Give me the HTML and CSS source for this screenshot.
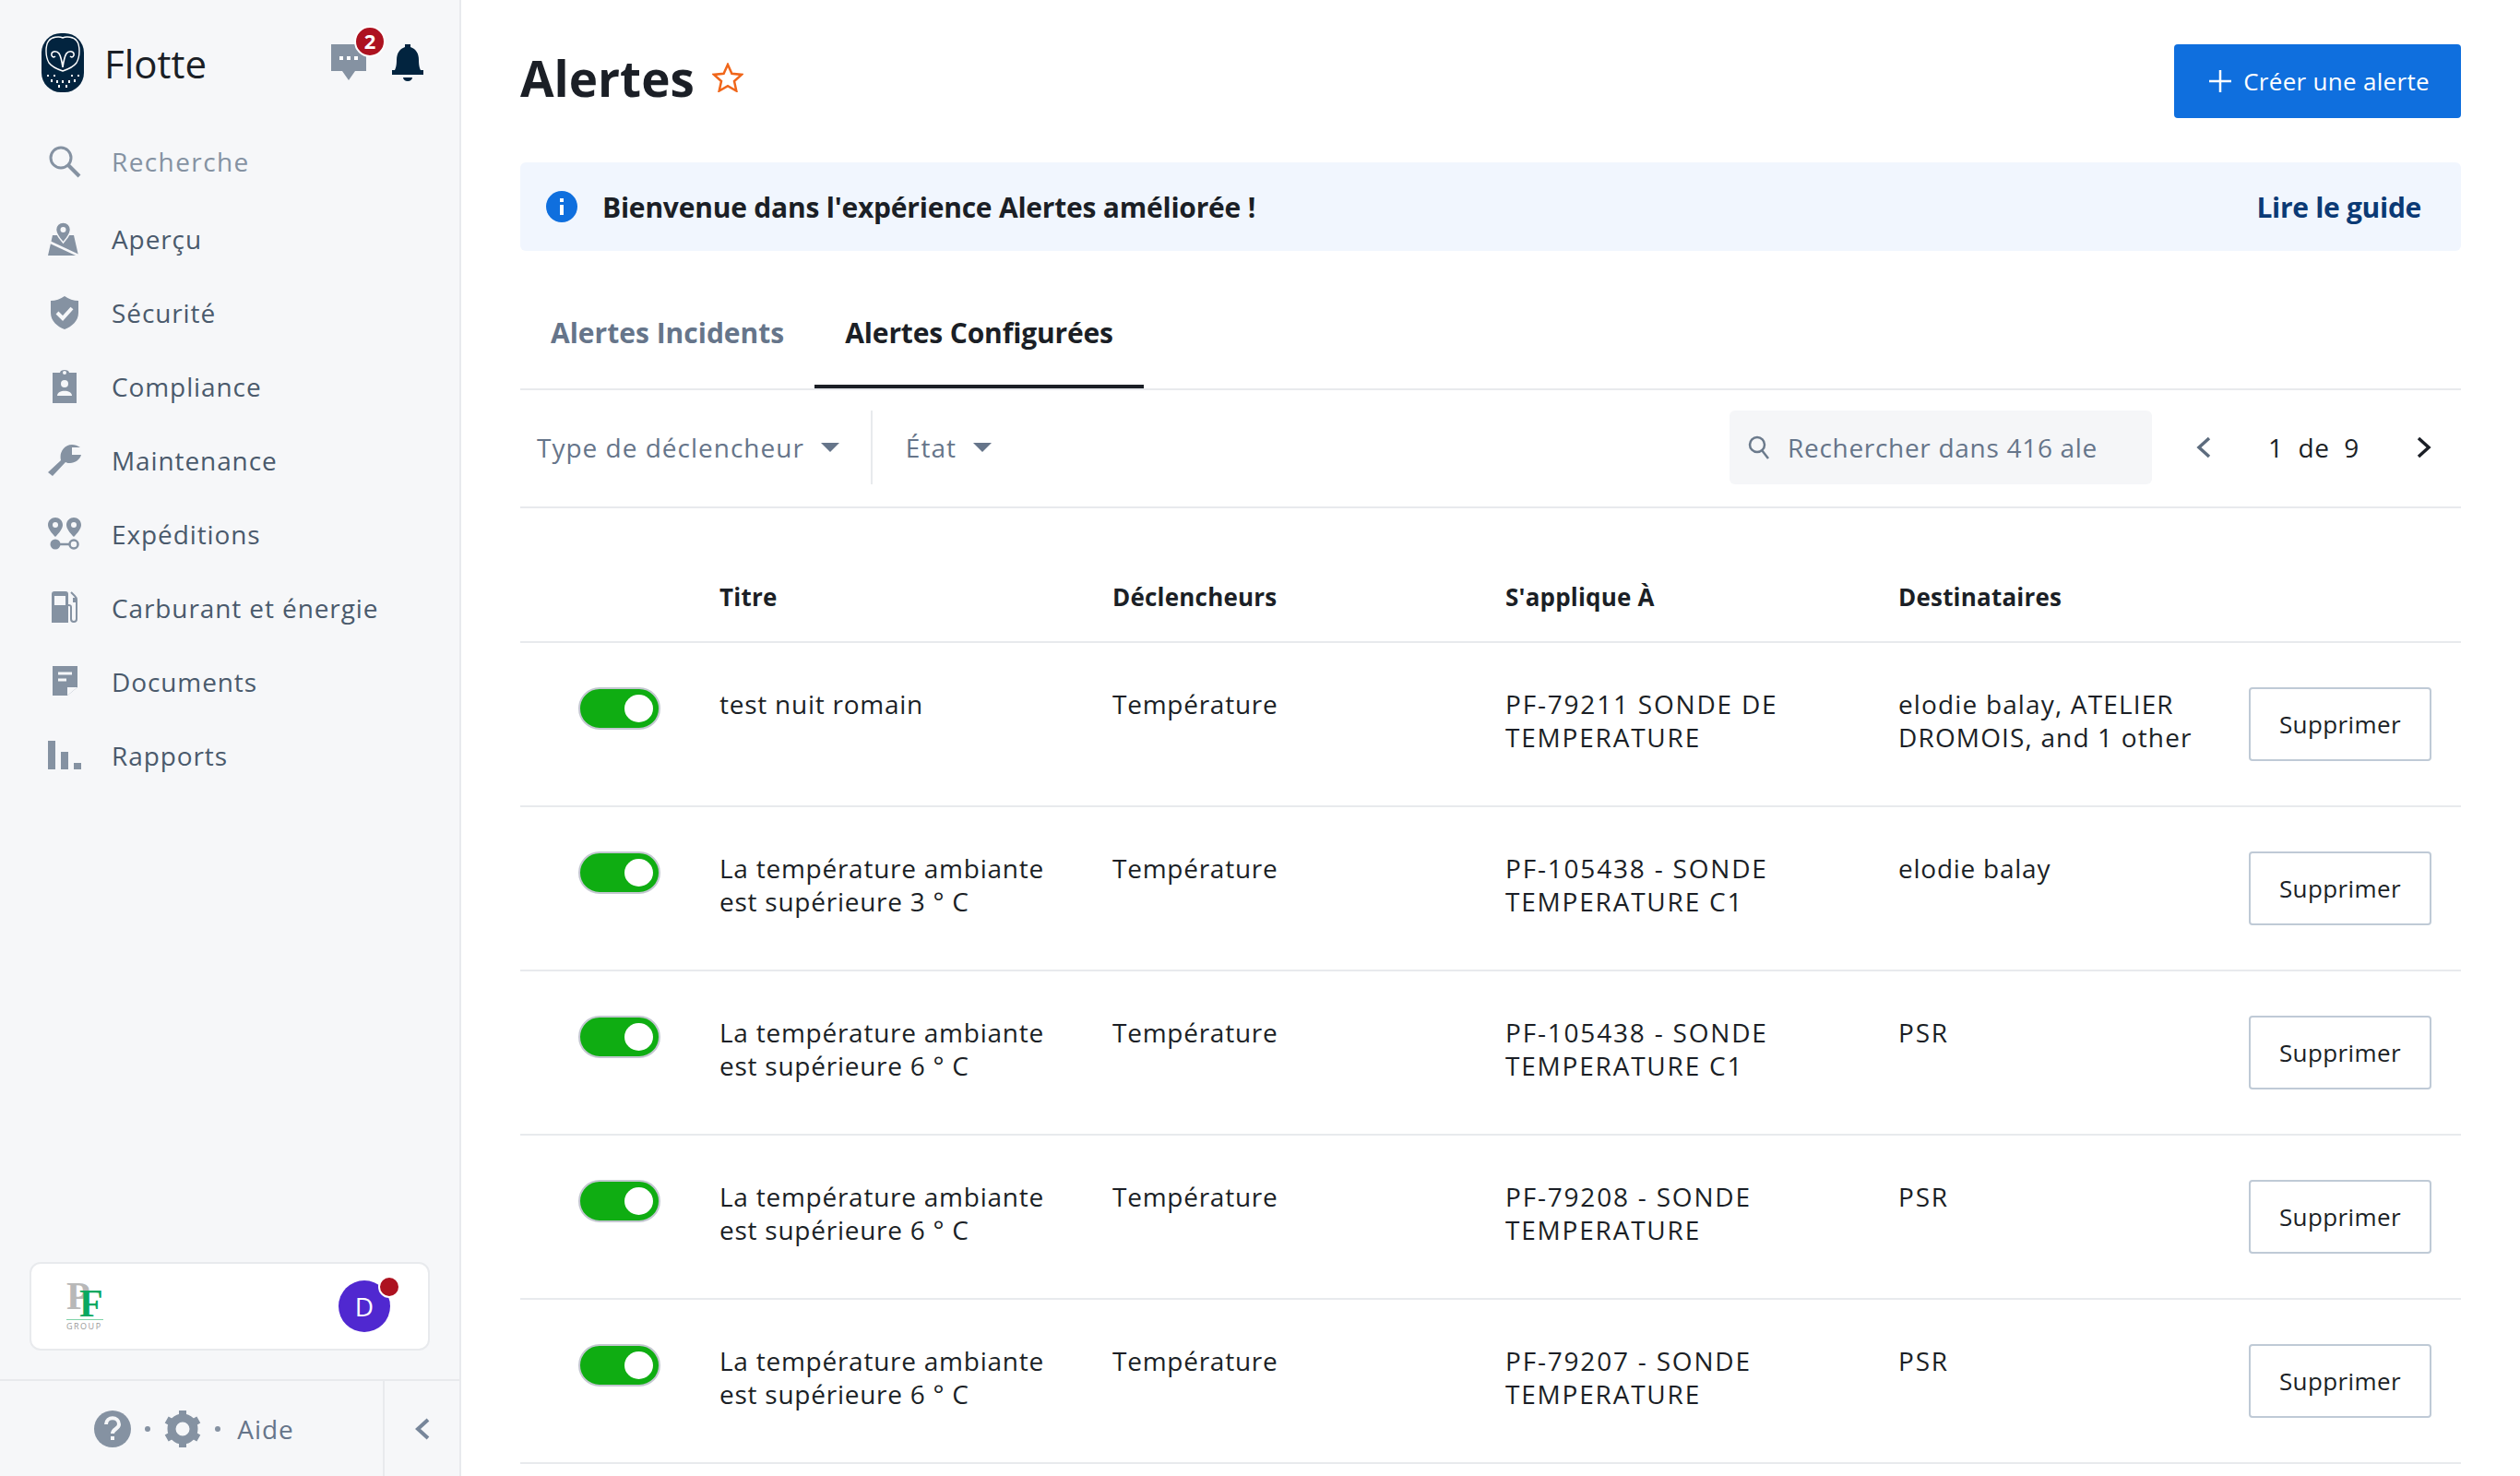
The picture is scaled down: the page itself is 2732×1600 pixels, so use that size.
FILE: index.html
```html
<!DOCTYPE html>
<html lang="fr">
<head>
  <meta charset="UTF-8">
  <title>Alertes</title>
  <link rel="stylesheet" href="styles.css">
</head>
<body>
  <!-- Sidebar -->
  <aside class="sidebar">
    <div class="brand">
      <svg class="brand-logo" viewBox="0 0 46 64">
        <rect width="46" height="64" rx="21" fill="#02243f"/>
        <path d="M23 5c4-2 12-1 15 3 4 5 4 17 0 24-3 4-9 7-15 9-6-2-12-5-15-9-4-7-4-19 0-24 3-4 11-5 15-3z" fill="none" stroke="#fff" stroke-width="1.4"/>
        <path d="M23 37c-1-7-2-12-4-15-2-3-7-3-8 0-1 3 2 5 4 3M23 37c1-7 2-12 4-15 2-3 7-3 8 0 1 3-2 5-4 3" fill="none" stroke="#fff" stroke-width="1.6"/>
        <g fill="#fff"><rect x="6" y="45" width="2" height="2"/><rect x="13" y="45" width="2" height="2"/><rect x="32" y="45" width="2" height="2"/><rect x="39" y="45" width="2" height="2"/><rect x="10" y="50" width="2" height="3"/><rect x="16" y="51" width="2" height="3"/><rect x="22" y="51" width="2" height="3"/><rect x="29" y="51" width="2" height="3"/><rect x="35" y="50" width="2" height="3"/><rect x="18" y="56" width="2" height="3"/><rect x="26" y="56" width="2" height="3"/></g>
      </svg>
      <span class="brand-name">Flotte</span>
      <div class="brand-actions">
        <div class="chat">
          <svg width="40" height="40" viewBox="0 0 40 40"><path d="M1 0h38v29H27l-7 10-7-10H1z" fill="#8592a2"/><g fill="#fff"><rect x="10" y="13" width="4" height="4"/><rect x="18" y="13" width="4" height="4"/><rect x="26" y="13" width="4" height="4"/></g></svg>
          <span class="chat-badge">2</span>
        </div>
        <svg width="34" height="40" viewBox="0 0 34 40"><path d="M14 0h6v3c6 2 9 7 9 14 0 6 1 9 2 11h3v5H0v-5h3c1-2 2-5 2-11 0-7 3-12 9-14z" fill="#02243f"/><path d="M12 36h10c0 2-2 4-5 4s-5-2-5-4z" fill="#02243f"/></svg>
      </div>
    </div>

    <nav class="nav">
      <a class="nav-item nav-search">
        <svg class="nav-icon" viewBox="0 0 36 36"><circle cx="14" cy="14" r="11" fill="none" stroke="#8592a2" stroke-width="3"/><path d="M22 22l12 12" stroke="#8592a2" stroke-width="4"/></svg>
        Recherche
      </a>
      <a class="nav-item">
        <svg class="nav-icon" viewBox="0 0 36 36"><path d="M5 14h23l5 22H0z" fill="#8592a2"/><path d="M1 21l32 15" stroke="#f6f7f9" stroke-width="2.500"/><path d="M16.500 0c-4.500 0-8 3.500-8 8 0 5 8 14 8 14s8-9 8-14c0-4.500-3.500-8-8-8z" fill="#8592a2" stroke="#f6f7f9" stroke-width="1.500"/><circle cx="16.500" cy="8" r="3" fill="#f6f7f9"/></svg>
        Aperçu
      </a>
      <a class="nav-item">
        <svg class="nav-icon" viewBox="0 0 36 36"><path d="M18 0c4 3 10 5 15 5v13c0 9-7 15-15 18C10 33 3 27 3 18V5c5 0 11-2 15-5z" fill="#8592a2"/><path d="M10 18l6 6 10-11" fill="none" stroke="#f6f7f9" stroke-width="4"/></svg>
        Sécurité
      </a>
      <a class="nav-item">
        <svg class="nav-icon" viewBox="0 0 36 36"><path d="M5 3h8c0-4 10-4 10 0h8v33H5z" fill="#8592a2"/><circle cx="18" cy="3" r="2" fill="#f6f7f9"/><circle cx="18" cy="15" r="4" fill="#f6f7f9"/><path d="M10 28c0-7 16-7 16 0z" fill="#f6f7f9"/></svg>
        Compliance
      </a>
      <a class="nav-item">
        <svg class="nav-icon" viewBox="0 0 36 36"><path d="M0 31l14-13c-2-8 3-17 12-17 3 0 6 1 9 3H26v8h10c-1 5-7 9-12 9-2 0-3 0-5-1L5 35z" fill="#8592a2"/></svg>
        Maintenance
      </a>
      <a class="nav-item">
        <svg class="nav-icon" viewBox="0 0 36 36"><path d="M8 0c4 0 8 3 8 8 0 4-4 9-8 13-4-4-8-9-8-13 0-5 4-8 8-8zM28 0c4 0 8 3 8 8 0 4-4 9-8 13-4-4-8-9-8-13 0-5 4-8 8-8z" fill="#8592a2"/><circle cx="8" cy="8" r="3" fill="#f6f7f9"/><circle cx="28" cy="8" r="3" fill="#f6f7f9"/><circle cx="8" cy="29" r="5.500" fill="#8592a2"/><path d="M12 29h12" stroke="#8592a2" stroke-width="2.500"/><circle cx="28" cy="29" r="4.500" fill="none" stroke="#8592a2" stroke-width="2.500"/></svg>
        Expéditions
      </a>
      <a class="nav-item">
        <svg class="nav-icon" viewBox="0 0 36 36"><path d="M4 3c0-2 1-3 3-3h12c2 0 3 1 3 3v31H4z" fill="#8592a2"/><rect x="7" y="5" width="12" height="10" fill="#f6f7f9"/><path d="M25 1l4 4c1 1 2 2 2 4v21c0 4-6 4-6 0V17c0-2-1-2-3-2" fill="none" stroke="#8592a2" stroke-width="2"/><rect x="27" y="7" width="4" height="5" fill="#8592a2"/></svg>
        Carburant et énergie
      </a>
      <a class="nav-item">
        <svg class="nav-icon" viewBox="0 0 36 36"><path d="M5 1h27v23L21 33H5z" fill="#8592a2"/><path d="M11 9h15M11 16h9" stroke="#f6f7f9" stroke-width="3"/><path d="M21 33V24h11z" fill="#f6f7f9"/><path d="M24 33l8-8v8z" fill="#f6f7f9"/></svg>
        Documents
      </a>
      <a class="nav-item">
        <svg class="nav-icon" viewBox="0 0 36 36"><rect x="0" y="2" width="8" height="31" fill="#8592a2"/><rect x="14" y="14" width="8" height="19" fill="#8592a2"/><rect x="28" y="26" width="8" height="7" fill="#8592a2"/></svg>
        Rapports
      </a>
    </nav>

    <div class="org-card">
      <div class="org-logo">
        <span class="org-p">P</span><span class="org-f">F</span>
        <span class="org-line"></span>
        <span class="org-group">GROUP</span>
      </div>
      <div class="avatar">D<span class="avatar-dot"></span></div>
    </div>

    <div class="side-footer">
      <div class="help">
        <svg width="40" height="40" viewBox="0 0 40 40"><circle cx="20" cy="20" r="20" fill="#8592a2"/><path d="M13 15c0-9 14-9 14 0 0 5-7 5-7 10" fill="none" stroke="#f6f7f9" stroke-width="4"/><rect x="18" y="28" width="4" height="4" fill="#f6f7f9"/></svg>
        <span class="help-dot"></span>
        <svg width="40" height="40" viewBox="0 0 40 40"><circle cx="20" cy="20" r="12" fill="none" stroke="#8592a2" stroke-width="9"/><g stroke="#8592a2" stroke-width="8"><path d="M20 0v8M20 32v8M2.700 10l7 4M30.300 26l7 4M2.700 30l7-4M30.300 14l7-4"/></g></svg>
        <span class="help-dot"></span>
        <span class="help-label">Aide</span>
      </div>
      <div class="collapse">
        <svg width="16" height="24" viewBox="0 0 16 24"><path d="M14 2L3 12l11 10" fill="none" stroke="#77869a" stroke-width="4"/></svg>
      </div>
    </div>
  </aside>

  <!-- Main content -->
  <main class="main">
    <header class="page-head">
      <h1>Alertes</h1>
      <svg class="star" width="34" height="32" viewBox="0 0 34 32"><path d="M17 2l4.400 9.800 10.600 1.100-8 7.100 2.300 10.500L17 25.100 7.700 30.500 10 20l-8-7.100 10.600-1.100z" fill="none" stroke="#f0661a" stroke-width="2.500"/></svg>
      <button class="btn-primary">
        <svg width="24" height="24" viewBox="0 0 24 24"><path d="M12 0v24M0 12h24" stroke="#fff" stroke-width="2.500"/></svg>
        Créer une alerte
      </button>
    </header>

    <div class="banner">
      <svg width="34" height="34" viewBox="0 0 34 34"><circle cx="17" cy="17" r="17" fill="#0f6fde"/><rect x="15" y="15" width="4" height="11" fill="#fff"/><rect x="15" y="8" width="4" height="4" fill="#fff"/></svg>
      <span class="banner-text">Bienvenue dans l'expérience Alertes améliorée !</span>
      <a class="banner-link">Lire le guide</a>
    </div>

    <div class="tabs">
      <a class="tab">Alertes Incidents</a>
      <a class="tab tab-active">Alertes Configurées</a>
    </div>

    <div class="filters">
      <div class="filter filter-first">Type de déclencheur<span class="caret"></span></div>
      <div class="filter">État<span class="caret"></span></div>
      <div class="search">
        <svg width="24" height="26" viewBox="0 0 24 26"><circle cx="10" cy="10" r="8" fill="none" stroke="#6b7a8c" stroke-width="2.500"/><path d="M15 16l7 9" stroke="#6b7a8c" stroke-width="2.500"/></svg>
        <span class="search-text">Rechercher dans 416 alertes</span>
      </div>
      <div class="pager">
        <svg width="16" height="24" viewBox="0 0 16 24"><path d="M14 2L3 12l11 10" fill="none" stroke="#5d6c7e" stroke-width="3.500"/></svg>
        <span class="pager-text">1&nbsp; de&nbsp; 9</span>
        <svg width="16" height="24" viewBox="0 0 16 24"><path d="M2 2l11 10L2 22" fill="none" stroke="#1b1f26" stroke-width="3.500"/></svg>
      </div>
    </div>

    <div class="table">
      <div class="row row-head">
        <div></div>
        <div>Titre</div>
        <div>Déclencheurs</div>
        <div>S'applique À</div>
        <div>Destinataires</div>
        <div></div>
      </div>

      <div class="row">
        <div><span class="toggle"></span></div>
        <div>test nuit romain</div>
        <div>Température</div>
        <div class="cell-caps">PF-79211 SONDE DE<br>TEMPERATURE</div>
        <div class="cell-recipients">elodie balay, ATELIER<br>DROMOIS, and 1 other</div>
        <button class="btn-outline">Supprimer</button>
      </div>
      <div class="row">
        <div><span class="toggle"></span></div>
        <div>La température ambiante<br>est supérieure 3 ° C</div>
        <div>Température</div>
        <div class="cell-caps">PF-105438 - SONDE<br>TEMPERATURE C1</div>
        <div>elodie balay</div>
        <button class="btn-outline">Supprimer</button>
      </div>
      <div class="row">
        <div><span class="toggle"></span></div>
        <div>La température ambiante<br>est supérieure 6 ° C</div>
        <div>Température</div>
        <div class="cell-caps">PF-105438 - SONDE<br>TEMPERATURE C1</div>
        <div class="cell-caps">PSR</div>
        <button class="btn-outline">Supprimer</button>
      </div>
      <div class="row">
        <div><span class="toggle"></span></div>
        <div>La température ambiante<br>est supérieure 6 ° C</div>
        <div>Température</div>
        <div class="cell-caps">PF-79208 - SONDE<br>TEMPERATURE</div>
        <div class="cell-caps">PSR</div>
        <button class="btn-outline">Supprimer</button>
      </div>
      <div class="row">
        <div><span class="toggle"></span></div>
        <div>La température ambiante<br>est supérieure 6 ° C</div>
        <div>Température</div>
        <div class="cell-caps">PF-79207 - SONDE<br>TEMPERATURE</div>
        <div class="cell-caps">PSR</div>
        <button class="btn-outline">Supprimer</button>
      </div>
    </div>
  </main>
</body>
</html>
```

FILE: styles.css
```css
/* Reset and body style */
html, body {
  margin: 0;
  padding: 0;
  height: 1600px;
  overflow: hidden;
  background-color: #fff;
  color: #1b1f26;
  font-family: "Open Sans", Arial, sans-serif;
  font-size: 28px;
  letter-spacing: 0.75px;
}

body {
  display: flex;
}

button {
  font-family: inherit;
}

/* Sidebar */
.sidebar {
  box-sizing: border-box;
  width: 500px;
  height: 1600px;
  flex-shrink: 0;
  display: flex;
  flex-direction: column;
  background-color: #f6f7f9;
  border-right: 2px solid #e8eaed;
}

.brand {
  box-sizing: border-box;
  height: 135px;
  display: flex;
  align-items: flex-start;
  padding: 36px 39px 0 45px;
}

.brand-logo {
  width: 46px;
  height: 64px;
}

.brand-name {
  margin-left: 22px;
  font-size: 42px;
  line-height: 66px;
  font-weight: 500;
  letter-spacing: 0;
  color: #1b1f26;
}

.brand-actions {
  margin-left: auto;
  padding-top: 12px;
  display: flex;
  gap: 27px;
}

.chat {
  position: relative;
  height: 40px;
}

.chat-badge {
  position: absolute;
  top: -20px;
  left: 26px;
  box-sizing: border-box;
  width: 34px;
  height: 34px;
  border: 2px solid #fff;
  border-radius: 50%;
  background-color: #ad1220;
  color: #fff;
  font-size: 22px;
  font-weight: 700;
  line-height: 29px;
  letter-spacing: 0;
  text-align: center;
}

.nav {
  display: flex;
  flex-direction: column;
}

.nav-item {
  height: 80px;
  display: flex;
  align-items: center;
  gap: 33px;
  padding-left: 52px;
  letter-spacing: 0.9px;
  color: #4a5a6c;
}

.nav-search {
  margin-bottom: 4px;
  letter-spacing: 1.4px;
  color: #8592a2;
}

.nav-icon {
  width: 36px;
  height: 36px;
}

.org-card {
  box-sizing: border-box;
  margin: auto 32px 31px 32px;
  height: 96px;
  display: flex;
  align-items: center;
  justify-content: space-between;
  padding: 0 41px 0 38px;
  background-color: #fff;
  border: 2px solid #e8eaed;
  border-radius: 12px;
}

.org-logo {
  position: relative;
  width: 40px;
  height: 50px;
  letter-spacing: 0;
}

.org-p {
  position: absolute;
  left: 0;
  top: -1px;
  font: 700 42px/30px "Liberation Serif", serif;
  color: #b8b8b8;
}

.org-f {
  position: absolute;
  left: 14px;
  top: 7px;
  font: 700 42px/30px "Liberation Serif", serif;
  color: #0aa860;
}

.org-line {
  position: absolute;
  left: 0;
  right: 0;
  top: 39px;
  height: 1px;
  background-color: #7fd3a8;
}

.org-group {
  position: absolute;
  left: 0;
  top: 42px;
  font-size: 9px;
  line-height: 9px;
  letter-spacing: 1.5px;
  color: #999;
}

.avatar {
  position: relative;
  width: 56px;
  height: 56px;
  border-radius: 50%;
  background-color: #5028d0;
  color: #fff;
  font-size: 28px;
  line-height: 56px;
  letter-spacing: 0;
  text-align: center;
}

.avatar-dot {
  position: absolute;
  top: -5px;
  right: -11px;
  width: 20px;
  height: 20px;
  border: 2px solid #fff;
  border-radius: 50%;
  background-color: #ad1220;
}

.side-footer {
  height: 103px;
  display: flex;
  border-top: 2px solid #e8eaed;
}

.help {
  box-sizing: border-box;
  width: 417px;
  padding-left: 6px;
  display: flex;
  align-items: center;
  justify-content: center;
  gap: 15px;
  border-right: 2px solid #e8eaed;
}

.help-dot {
  width: 6px;
  height: 6px;
  border-radius: 50%;
  background-color: #8592a2;
}

.help-label {
  margin-left: 3px;
  letter-spacing: 1px;
  color: #66758a;
}

.collapse {
  flex: 1;
  display: flex;
  align-items: center;
  justify-content: center;
}

/* Main column */
.main {
  flex: 1;
  min-width: 0;
  padding: 48px 64px 0 64px;
}

.page-head {
  height: 80px;
  display: flex;
  align-items: center;
}

.page-head h1 {
  margin: 0 0 8px 0;
  font-size: 53px;
  font-weight: 700;
  letter-spacing: 0;
}

.star {
  margin: 0 0 8px 19px;
}

.btn-primary {
  margin-left: auto;
  width: 311px;
  height: 80px;
  padding: 0 0 0 4px;
  display: flex;
  align-items: center;
  justify-content: center;
  gap: 13px;
  border: none;
  border-radius: 4px;
  background-color: #0f6fde;
  color: #fff;
  font-size: 26px;
  letter-spacing: 0.3px;
}

.banner {
  box-sizing: border-box;
  margin-top: 48px;
  height: 96px;
  display: flex;
  align-items: center;
  padding: 0 43px 0 28px;
  background-color: #f1f6fe;
  border-radius: 6px;
}

.banner-text {
  margin-left: 27px;
  font-size: 30px;
  font-weight: 700;
  letter-spacing: -0.22px;
}

.banner-link {
  margin-left: auto;
  font-size: 30px;
  font-weight: 700;
  letter-spacing: -0.3px;
  color: #0b3a75;
}

/* Tabs */
.tabs {
  box-sizing: border-box;
  margin-top: 49px;
  height: 102px;
  display: flex;
  border-bottom: 2px solid #e8eaed;
}

.tab {
  box-sizing: border-box;
  height: 100px;
  padding: 0 33px 18px 33px;
  display: flex;
  align-items: center;
  border-bottom: 4px solid transparent;
  font-size: 30px;
  font-weight: 700;
  letter-spacing: 0;
  color: #66758a;
}

.tab-active {
  letter-spacing: -0.15px;
  color: #1b1f26;
  border-bottom-color: #1b1f26;
}

/* Filter row */
.filters {
  box-sizing: border-box;
  height: 128px;
  display: flex;
  align-items: center;
  padding-bottom: 2px;
  border-bottom: 2px solid #e8eaed;
  letter-spacing: 1px;
  color: #66758a;
}

.filter {
  display: flex;
  align-items: center;
  padding-left: 36px;
}

.filter-first {
  height: 80px;
  padding: 0 34px 0 18px;
  border-right: 2px solid #e8eaed;
}

.caret {
  margin-left: 18px;
  width: 0;
  height: 0;
  border-left: 10px solid transparent;
  border-right: 10px solid transparent;
  border-top: 10px solid #66758a;
}

.search {
  box-sizing: border-box;
  margin-left: auto;
  width: 458px;
  height: 80px;
  display: flex;
  align-items: center;
  gap: 19px;
  padding: 0 60px 0 20px;
  background-color: #f5f6f8;
  border-radius: 6px;
  letter-spacing: 0.7px;
}

.search-text {
  flex: 1;
  overflow: hidden;
  white-space: nowrap;
}

.pager {
  width: 303px;
  margin-left: 32px;
  display: flex;
  align-items: center;
  justify-content: space-between;
  box-sizing: border-box;
  padding: 0 32px 0 16px;
  letter-spacing: 0.6px;
  color: #1b1f26;
}

/* Table */
.row {
  box-sizing: border-box;
  height: 178px;
  display: grid;
  grid-template-columns: 216px 426px 426px 426px 380px 198px;
  padding-top: 48px;
  line-height: 36px;
  border-bottom: 2px solid #e8eaed;
}

.row-head {
  height: 146px;
  padding-top: 78px;
  font-size: 26px;
  font-weight: 700;
  letter-spacing: 0.2px;
}

.cell-caps {
  letter-spacing: 1.8px;
}

.cell-recipients {
  letter-spacing: 1.15px;
}

.toggle {
  position: relative;
  display: block;
  box-sizing: border-box;
  margin-left: 63px;
  width: 89px;
  height: 46px;
  background-color: #0fad12;
  border: 2px solid #c3c7d0;
  border-radius: 23px;
}

.toggle::after {
  content: "";
  position: absolute;
  top: 6px;
  left: 48px;
  width: 31px;
  height: 30px;
  background-color: #fff;
  border-radius: 50%;
}

.btn-outline {
  width: 198px;
  height: 80px;
  padding: 0;
  background-color: #fff;
  border: 2px solid #bfcad6;
  border-radius: 4px;
  color: #1b1f26;
  font-size: 26px;
  letter-spacing: 0.4px;
}
```
